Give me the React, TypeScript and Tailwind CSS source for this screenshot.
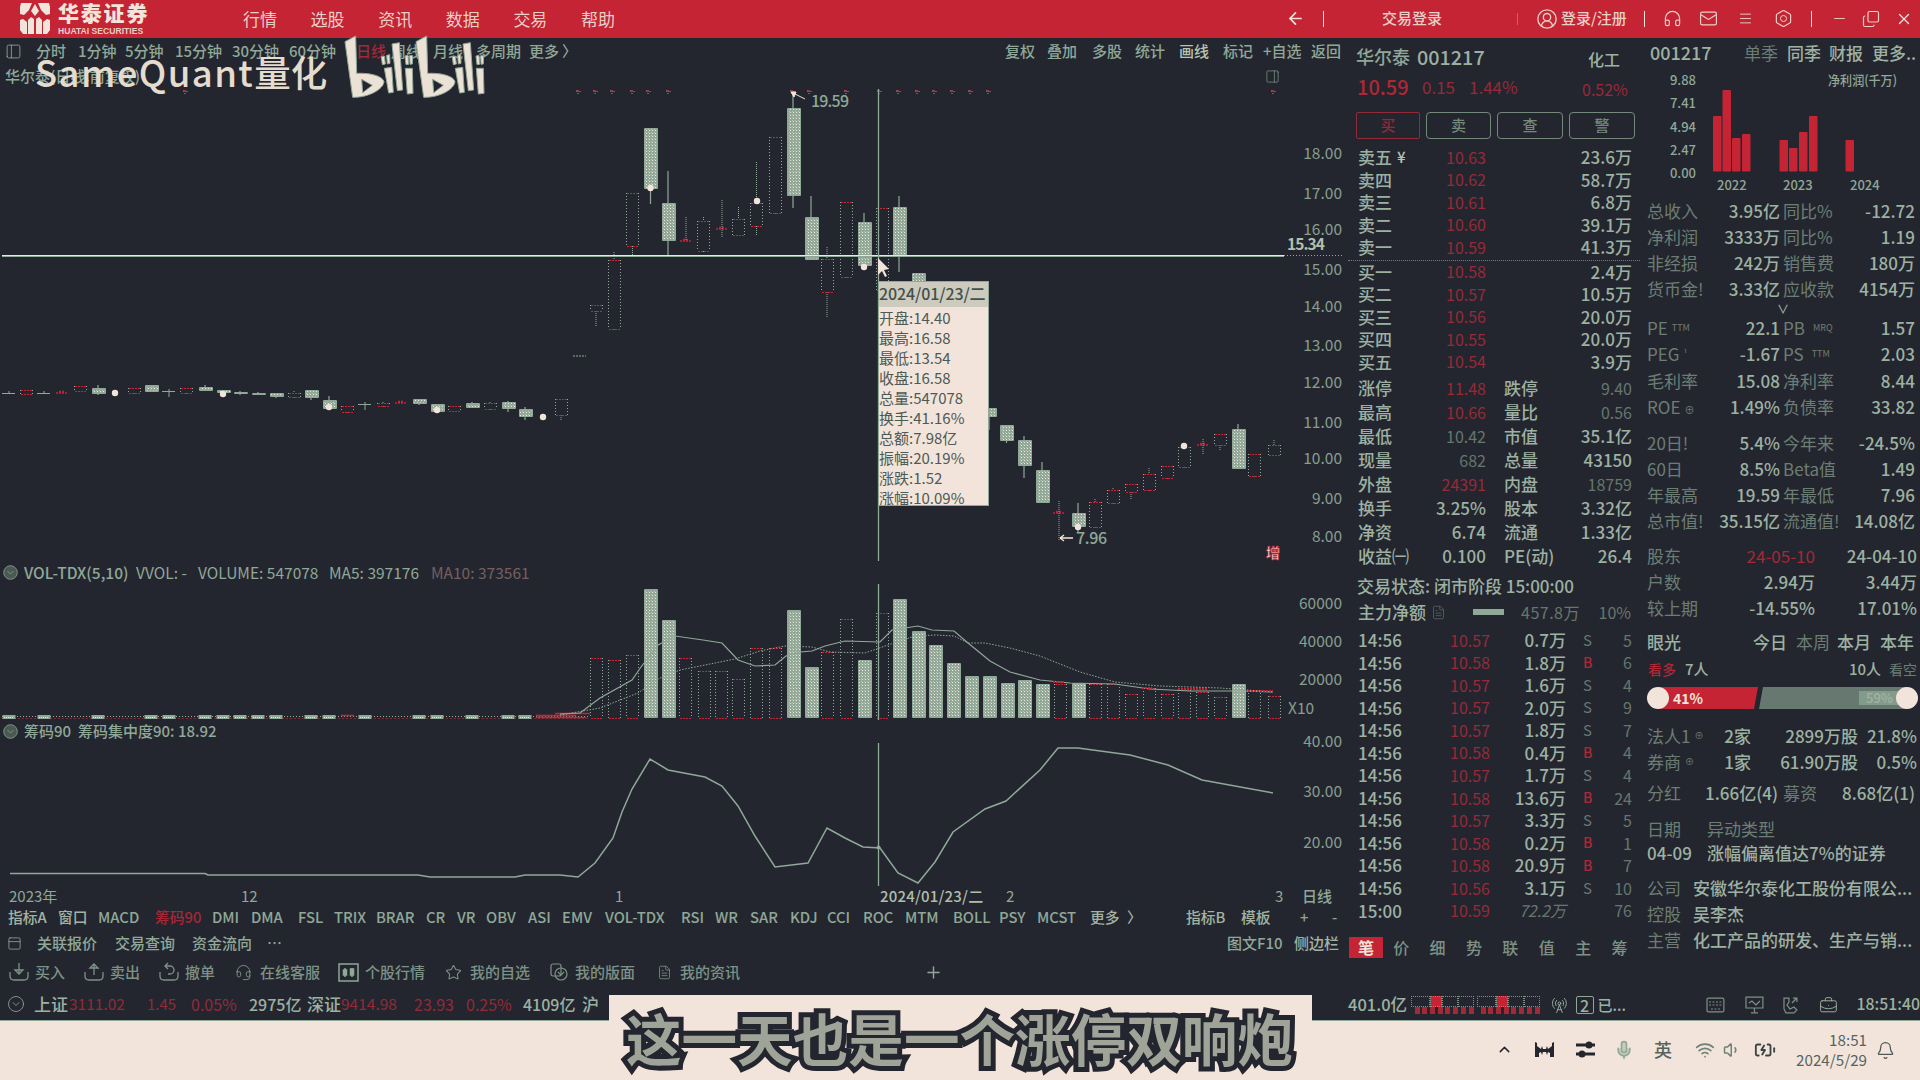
import React from "react";
import {
  ArrowLeft, Bell, BatteryCharging, BriefcaseBusiness, ChevronUp, CircleUserRound, Copy,
  FileText, Headphones, Headset, Hexagon, Mail, Menu, Mic, Minus,
  Plus, RadioTower, Star, Volume1, Wifi, X, CircleChevronDown, ScanLine, PanelTop,
} from "lucide-react";

const BG = "#24262f";
const G = "#8fa898";
const R = "#c42434";
const C = "#f2e4da";

type Cell = [React.ReactNode, string?];

function Row({ cols, h, cells, cls = "" }: { cols: string; h: string; cells: Cell[]; cls?: string }) {
  return (
    <div className={`grid shrink-0 items-center whitespace-nowrap pb-[2px] ${cols} ${h} ${cls}`}>
      {cells.map(([t, c], i) => (
        <span key={i} className={`min-w-0 ${c ?? ""}`}>{t}</span>
      ))}
    </div>
  );
}

/* ---------- chart data ---------- */

type Kind = "s" | "h";
const candles: [number, number, number, number, number, Kind][] = [
  [26, 390, 394, 390, 394, "h"], [80, 386, 391, 386, 391, "h"], [98, 388, 394, 385, 395, "s"],
  [134, 388, 393, 388, 394, "h"], [151, 385, 392, 385, 392, "s"], [186, 388, 393, 388, 394, "h"],
  [205, 387, 391, 385, 391, "s"], [223, 390, 393, 390, 396, "s"], [240, 392, 394, 391, 395, "s"],
  [258, 393, 395, 392, 395, "s"], [276, 393, 397, 393, 398, "s"], [294, 393, 397, 391, 399, "h"],
  [311, 390, 398, 390, 400, "s"], [329, 400, 409, 396, 410, "s"], [347, 406, 412, 406, 413, "h"],
  [383, 403, 406, 402, 407, "h"], [419, 399, 404, 399, 405, "s"], [437, 404, 412, 404, 413, "s"],
  [454, 406, 411, 406, 411, "h"], [472, 403, 408, 402, 408, "s"], [490, 403, 409, 402, 411, "h"],
  [508, 402, 409, 401, 412, "s"], [525, 409, 417, 407, 420, "s"], [561, 399, 415, 399, 421, "h"],
  [596, 305, 311, 305, 327, "h"], [614, 260, 329, 252, 331, "h"], [632.5, 193, 246, 193, 255, "h"],
  [650.5, 128, 189, 128, 204, "s"], [668, 203, 241, 171, 255, "s"], [703.5, 221, 251, 217, 253, "h"],
  [738.5, 219, 235, 207, 235, "h"], [756.5, 203, 226, 162, 236, "h"], [775, 137, 213, 137, 215, "h"],
  [793, 108, 196, 92, 208, "s"], [811, 217, 260, 196, 260, "s"], [827, 259, 292, 247, 318, "h"],
  [846, 202, 277, 202, 279, "h"], [864, 222, 266, 213, 268, "s"], [882, 208, 290, 208, 290, "h"],
  [899, 207, 256, 196, 272, "s"], [918, 273, 290, 273, 290, "s"], [989, 408, 417, 408, 430, "s"],
  [1006.5, 425, 441, 425, 443, "s"], [1024, 440, 466, 436, 478, "s"], [1042, 470, 503, 462, 503, "s"],
  [1078, 513, 527, 503, 533, "s"], [1095, 502, 527, 499, 528, "h"], [1113, 490, 503, 488, 504, "h"],
  [1131, 484, 492, 484, 499, "h"], [1149, 474, 490, 468, 491, "h"], [1167, 466, 478, 466, 480, "h"],
  [1184, 447, 467, 447, 468, "h"], [1220, 434, 445, 434, 451, "h"], [1238, 429, 469, 424, 469, "s"],
  [1254, 454, 476, 454, 477, "h"], [1274, 445, 455, 440, 455, "h"],
];

const volumes: [number, number, Kind][] = [
  [596, 658, "h"], [614, 660, "h"], [632.5, 655, "h"], [650.5, 589, "s"], [668, 620, "s"], [685, 658, "h"],
  [704, 671, "h"], [721, 671, "h"], [738.5, 679, "h"], [756.5, 648, "h"], [775, 648, "h"], [793, 610, "s"],
  [811, 667, "s"], [827, 652, "h"], [846, 619, "h"], [864, 660, "s"], [882, 613, "h"], [899, 599, "s"],
  [918, 631, "s"], [935.5, 645, "s"], [953.5, 663, "s"], [971, 676, "s"], [989, 676, "s"], [1007, 683, "s"],
  [1024, 680, "s"], [1042, 684, "s"], [1060, 684, "h"], [1078, 683, "s"], [1095, 684, "h"], [1113, 684, "h"],
  [1131, 694, "h"], [1149, 688, "h"], [1167, 694, "h"], [1184, 690, "h"], [1202, 692, "h"], [1220, 697, "h"],
  [1238, 684, "s"], [1254, 690, "h"], [1274, 696, "h"],
];

const flatSolid = [9, 44, 98, 151, 169, 205, 223, 240, 258, 276, 311, 329, 365, 419, 437, 472, 508, 525];
const ticks = [185, 578, 595, 612, 632, 648, 668, 792, 809, 846, 879, 898, 917, 934, 952, 970, 988, 1273];
const prices: [string, number][] = [
  ["18.00", 153], ["17.00", 193], ["16.00", 229], ["15.00", 269], ["14.00", 306], ["13.00", 345],
  ["12.00", 382], ["11.00", 422], ["10.00", 458], ["9.00", 498], ["8.00", 536],
];

function Defs() {
  return (
    <defs>
      <pattern id="dots" width="3" height="3" patternUnits="userSpaceOnUse">
        <rect width="3" height="3" fill={G} />
        <rect width="1" height="1" x="1" y="1" fill={C} />
        <rect width="1" height="1" x="0" y="0" fill="#b9c0ae" />
      </pattern>
    </defs>
  );
}

function Body({ x, t, b, k }: { x: number; t: number; b: number; k: Kind }) {
  const l = Math.round(x - 6.5) + 0.5;
  if (k === "s")
    return (
      <g>
        <rect x={l - 0.5} y={t} width={14} height={b - t} fill={G} rx={1} />
        <rect x={l + 0.5} y={t + 1} width={12} height={Math.max(0, b - t - 2)} fill="url(#dots)" />
      </g>
    );
  return (
    <g shapeRendering="crispEdges" fill="none">
      <path d={`M${l} ${t}V${b}M${l + 12} ${t}V${b}`} stroke={G} strokeDasharray="1 2" />
      <path d={`M${l} ${t + 0.5}H${l + 12}M${l} ${b + 0.5}H${l + 12}`} stroke={R} strokeDasharray="2 1" />
    </g>
  );
}

function PriceChart() {
  return (
    <svg className="block shrink-0 font-['Noto_Sans_CJK_SC','Noto_Sans',sans-serif]" width="1348" height="475" viewBox="0 86 1348 475">
      <Defs />
      {ticks.map((x) => (
        <g key={x}>
          <rect x={x - 1} y={90} width={2} height={2} fill={R} />
          <path d={`M${x - 2} 91h1M${x} 93v1M${x + 1.5} 91.5h1`} stroke={G} />
        </g>
      ))}
      {candles.map(([x, t, b, wt, wb, k], i) => (
        <g key={i}>
          {k === "s" ? (
            <path d={`M${x} ${wt}V${wb}`} stroke={G} strokeWidth={1.2} />
          ) : (
            <path d={`M${x} ${wt}V${t}M${x} ${b}V${wb}`} stroke={G} strokeDasharray="1 1" />
          )}
          <Body x={x} t={t} b={b} k={k} />
        </g>
      ))}
      {[[9, 393], [44, 393], [169, 391], [365, 404]].map(([x, y]) => (
        <path key={x} d={`M${x - 7} ${y + 0.5}h13M${x} ${y - 2}v${x > 100 ? 8 : 3}`} stroke={G} />
      ))}
      {[[62, 393], [401, 403], [686, 241], [722, 229], [1059, 513], [1203, 445]].map(([x, y]) => (
        <path key={x} d={`M${x - 6} ${y}h12M${x - 3} ${y - 1.5}h6`} stroke={R} strokeWidth={1.5} strokeDasharray="2 1" />
      ))}
      <path d="M686 217v23M722 200v38M1059 501v32M1203 439v16M1059 533V540" stroke={G} strokeDasharray="1 1" />
      <path d="M573 356h13" stroke={G} strokeDasharray="2 1" />
      {[[115, 393], [223, 394], [329, 407], [437, 410], [543, 417], [650.5, 188], [757, 201], [864, 267], [1078, 527], [1184, 446]].map(([x, y]) => (
        <circle key={x} cx={x} cy={y} r={3.2} fill={C} />
      ))}
      <path d="M2 255.5H1284" stroke={C} />
      <path d="M2 256.5H1284" stroke={G} />
      <path d="M1284 255.5h60" stroke={G} strokeDasharray="1 2" />
      <path d="M878.5 89V561" stroke={G} strokeWidth={1.3} />
      <path d="M793 93l12 6M791 92h5l-2 5z" stroke={C} fill={C} />
      <text x="811" y="106.500" fontSize="16" fontWeight="500" fill={G} textLength="38">19.59</text>
      <path d="M1060 538h13M1060 538l4-3M1060 538l4 3" stroke={C} fill="none" strokeWidth={1.3} />
      <text x="1076" y="544" fontSize="16" fontWeight="500" fill={G} textLength="31">7.96</text>
      {prices.map(([s, y]) => (
        <text key={s} x="1342" y={y + 5.5} fontSize="15.500" textAnchor="end" fill="#879e8f">{s}</text>
      ))}
      <text x="1287" y="250" fontSize="15.500" fontWeight="600" fill="#b3bfae" textLength="38">15.34</text>
      <text x="1266" y="558" fontSize="14" fontWeight="700" fill={C} stroke={R} strokeWidth="0.7">增</text>
      <path d="M878 258l0 17 4-4 3 6 2-1-3-6 5-1z" fill={C} />
    </svg>
  );
}

function VolumeChart() {
  return (
    <svg className="block shrink-0 font-['Noto_Sans_CJK_SC','Noto_Sans',sans-serif]" width="1348" height="137" viewBox="0 583 1348 137">
      <path d="M2 716.5H590" stroke={G} strokeDasharray="1 2" />
      <path d="M2 718.5H590" stroke="#7d2a36" strokeDasharray="2 2" />
      {flatSolid.map((x) => (
        <g key={x}>
          <rect x={x - 6.5} y={715} width={13} height={4} fill={G} />
          <path d={`M${x - 5} 717.5h10`} stroke={C} strokeDasharray="1 1" />
        </g>
      ))}
      <path d="M341 715.5h13M536 715.5h40M555 713.5h35M536 717.5h50" stroke={R} strokeWidth={1.5} />
      {volumes.map(([x, t, k], i) => <Body key={i} x={x} t={t} b={718} k={k} />)}
      <path d="M560 715L600 708 638 693 660 678 680 670 735 659 760 651 785 646 812 647 830 652 865 653 888 645 915 636 935 635 954 636 968 643 985 643 1010 648 1040 656 1080 672 1115 682 1160 686 1220 688 1273 692" fill="none" stroke={G} strokeDasharray="1.5 1.5" />
      <path d="M560 714L580 713 600 698 632 680 641 667 658 645 675 636 703 640 722 643 738 660 755 666 775 665 786 656 800 652 812 651 825 646 845 641 880 642 892 630 918 626 932 630 954 631 968 643 990 661 1010 672 1040 680 1070 683 1115 684 1150 689 1190 691 1240 691 1273 692" fill="none" stroke={G} strokeWidth={1.2} />
      <path d="M1053 682h12M1142 688h10M1178 689h30M1248 691h25" stroke={R} strokeWidth={2} strokeDasharray="2 1" />
      <path d="M878.500 584V720" stroke={G} strokeWidth={1.3} />
      {([["60000", 603], ["40000", 641], ["20000", 679]] as [string, number][]).map(([s, y]) => (
        <text key={s} x="1342" y={y + 5.5} fontSize="15.500" textAnchor="end" fill="#879e8f">{s}</text>
      ))}
      <text x="1288" y="713.500" fontSize="15.500" fill="#879e8f">X10</text>
    </svg>
  );
}

function ChipChart() {
  return (
    <svg className="block shrink-0 overflow-visible font-['Noto_Sans_CJK_SC','Noto_Sans',sans-serif]" width="1348" height="144" viewBox="0 742 1348 144">
      <path d="M10 873.5H205L208 875H418L430 877H515L525 875H560L578 877 595 863 613 838 622 812 632 789 650 759 668 770 705 777 722 786 738 806 755 836 775 867 808 863 827 828 845 838 863 847 880 848 898 873 918 883 935 862 953 832 985 809 1006 801 1040 770 1058 748H1078L1130 755 1168 765 1202 780 1273 793" fill="none" stroke={G} strokeWidth={1.5} />
      <path d="M878.500 743V886" stroke={G} strokeWidth={1.3} />
      <circle cx="878.500" cy="847.500" r="2" fill={G} />
      {([["40.00", 741], ["30.00", 791], ["20.00", 842]] as [string, number][]).map(([s, y]) => (
        <text key={s} x="1342" y={y + 5.5} fontSize="15.500" textAnchor="end" fill="#879e8f">{s}</text>
      ))}
    </svg>
  );
}

/* ---------- header ---------- */

function BiliLogo() {
  const half = (
    <g>
      <path fillRule="evenodd" d="M45 35L64 25 77 18 80 130C120 128 158 138 162 155C160 178 115 203 68 202L58 130zM95 148L127 166 98 188z" />
      <path d="M163 115L185 112 190 187 176 189zM154 80l9-2 3 24-9 2zM170 76l9-2 1 26-8 2zM186 42L208 38 218 180 202 182zM226 115L247 115 249 190 232 192zM225 78l9-2 2 27-8 1zM239 77h9l-1 25-7 1z" />
    </g>
  );
  return (
    <svg width="180" height="74" viewBox="0 0 540 222" fill="#ece1d5" stroke={G} strokeWidth="3">
      {half}
      <g transform="translate(213 0)">{half}</g>
    </svg>
  );
}

function Header() {
  return (
    <header className="flex h-[38px] shrink-0 items-center bg-[#c42434] text-[#e9cfc6]">
      <div className="flex w-[243px] items-center pl-5">
        <svg width="30" height="32" viewBox="0 0 30 32" fill={C}>
          <path d="M1 0h11l-3 7-5 5-4-1V4zM29 0H18l3 7 5 5 4-1V4zM15 1l4 7-4 5-4-5zM0 17l3-1 4 3v12H3l-3-4zM30 17l-3-1-4 3v12h4l3-4zM8 17l3-3 3 2v15H8zM22 17l-3-3-3 2v15h6z" />
        </svg>
        <div className="ml-[8px] flex flex-col">
          <span className="-mt-[2px] h-[24px] text-[21px] font-black leading-[23px] tracking-[1.800px] text-[#f2e4da]">华泰证券</span>
          <span className="mt-[2px] h-[8px] whitespace-nowrap font-['Liberation_Sans',sans-serif] text-[8.600px] font-bold leading-[8px]">HUATAI SECURITIES</span>
        </div>
      </div>
      <nav className="flex w-[1043px] gap-[33.6px] text-[17px]">
        {["行情", "选股", "资讯", "数据", "交易", "帮助"].map((t) => <span key={t}>{t}</span>)}
      </nav>
      <Row
        cols="grid-cols-[37px_59px_135px_19px_25px_83px_19px_36px_39px_36px_37px_20px_31px_33px_25px]"
        h="h-[38px]"
        cls="pt-[1px] text-[15px] font-medium"
        cells={[
          [<ArrowLeft size={19} color={C} strokeWidth={2.2} />],
          [<i className="block h-4 w-px bg-[#f2e4da]" />],
          ["交易登录"],
          [<i className="block h-3 w-px bg-[#8f7a78]" />],
          [<CircleUserRound size={22} strokeWidth={1.5} />],
          ["登录/注册"],
          [<i className="block h-4 w-px bg-[#f2e4da]" />],
          [<Headphones size={19} strokeWidth={1.5} />],
          [<Mail size={19} strokeWidth={1.5} />],
          [<Menu size={15} strokeWidth={1.5} />],
          [<span className="relative block"><Hexagon size={19} strokeWidth={1.5} /><i className="absolute left-[6px] top-[6px] size-[7px] rounded-full border border-[#e9cfc6]" /></span>],
          [<i className="block h-4 w-px bg-[#f2e4da]" />],
          [<Minus size={17} strokeWidth={1.3} />],
          [<Copy size={18} strokeWidth={1.6} className="-scale-y-100" />],
          [<X size={18} color={C} strokeWidth={1.8} />],
        ]}
      />
    </header>
  );
}

/* ---------- left ---------- */

function Tooltip() {
  const rows = ["开盘:14.40", "最高:16.58", "最低:13.54", "收盘:16.58", "总量:547078", "换手:41.16%", "总额:7.98亿", "振幅:20.19%", "涨跌:1.52", "涨幅:10.09%"];
  return (
    <div className="absolute left-[878px] top-[243px] h-[225px] w-[111px] overflow-hidden border border-[#8fa898] bg-[#f2e4da] text-[15px] text-[#4d5a56]">
      <div className="h-[25px] bg-[#cdcbbd] text-[16px] font-medium leading-[23px] tracking-[-0.100px] text-[#43504c]">2024/01/23/二</div>
      <div className="pt-px">
        {rows.map((r) => <div key={r} className="h-5 whitespace-nowrap leading-5">{r}</div>)}
      </div>
    </div>
  );
}

const Dot = () => (
  <svg width="15" height="15" viewBox="0 0 15 15" fill="none" stroke="#7d9286">
    <circle cx="7.500" cy="7.500" r="6.800" fill="#4b5953" /><path d="M4.500 6l3 3 3-3" />
  </svg>
);

function Tray({ d }: { d: string }) {
  return (
    <svg width="20" height="20" viewBox="0 0 20 20" fill="none" stroke="#7d9286" strokeWidth="1.3">
      <path d="M1 10v4q0 4 4 4h10q4 0 4-4v-4" />
      <path d={d} />
    </svg>
  );
}

function Left() {
  const act: Cell[] = [
    [<Tray d="M10 1v11M6 8l4 4 4-4z" />], ["买入"], [<Tray d="M10 13V2M6 6l4-4 4 4z" />], ["卖出"],
    [<Tray d="M6 4h5a4 4 0 0 1 0 8H9M9 1L6 4l3 3" />], ["撤单"], [<Headset size={17} strokeWidth={1.3} />], ["在线客服"],
    [<svg width="21" height="19" viewBox="0 0 21 19" fill="none" stroke={G} strokeWidth="1.500"><path d="M1 1h19v17H1zM7 5v9M14 5v9" /><path d="M5.500 7h3v5h-3zM12.500 6h3v6h-3z" fill={G} /></svg>], ["个股行情"],
    [<Star size={17} strokeWidth={1.5} />], ["我的自选"],
    [<svg width="18" height="18" viewBox="0 0 18 18" fill="none" stroke="#7d9286" strokeWidth="1.200"><rect x="1" y="1" width="10" height="12" rx="2" /><circle cx="11" cy="11" r="6" /><path d="M8 9l3 3 3-3" /></svg>], ["我的版面"],
    [<FileText size={15} strokeWidth={1.3} />], ["我的资讯"],
    [<Plus size={19} color={G} strokeWidth={1.8} />],
  ];
  return (
    <section className="relative flex w-[1348px] shrink-0 flex-col overflow-hidden text-[15px] text-[#8fa898]">
      <Row
        cols="grid-cols-[31px_42px_47px_50px_57px_57px_67px_35px_42px_43px_53px_33px_443px_42px_45px_43px_44px_44px_40px_48px_36px]"
        h="h-[28px]"
        cls="pl-[5px] font-medium"
        cells={[
          [<PanelTop size={17} strokeWidth={1.2} className="-rotate-90" />], ["分时"], ["1分钟"], ["5分钟"], ["15分钟"], ["30分钟"], ["60分钟"],
          ["日线", "text-[#a52836]"], ["周线"], ["月线"], ["多周期"], ["更多"], ["〉"],
          ["复权"], ["叠加"], ["多股"], ["统计"], ["画线", "text-[#b7c3b2]"], ["标记"], ["+自选"], ["返回"],
        ]}
      />
      <div className="flex h-5 shrink-0 items-center pl-[5px]">
        <span className="w-[1260px] font-medium">华尔泰(日线.前复权)</span>
        <PanelTop size={15} strokeWidth={1} className="rotate-90" />
      </div>
      <PriceChart />
      <Row
        cols="grid-cols-[21px_112px_62px_131px_102px_120px]"
        h="h-[22px]"
        cls="pl-[3px] text-[15.5px]"
        cells={[[<Dot />], ["VOL-TDX(5,10)", "font-medium"], ["VVOL: -"], ["VOLUME: 547078"], ["MA5: 397176"], ["MA10: 373561", "text-[#75605f]"]]}
      />
      <VolumeChart />
      <Row cols="grid-cols-[21px_54px_200px]" h="h-[22px]" cls="pl-[3px] font-medium" cells={[[<Dot />], ["筹码90"], ["筹码集中度90: 18.92"]]} />
      <ChipChart />
      <Row
        cols="grid-cols-[232px_374px_265px_126px_269px_27px_40px]"
        h="h-[18px]"
        cls="-mt-px mb-px pl-[9px]"
        cells={[["2023年"], ["12"], ["1"], ["2024/01/23/二", "font-medium tracking-[0.2px] text-[#b0bdac]"], ["2"], ["3"], ["日线", "font-medium"]]}
      />
      <Row
        cols="grid-cols-[50px_40px_57px_57px_39px_47px_36px_42px_50px_31px_29px_42px_34px_43px_76px_34px_35px_40px_37px_36px_42px_48px_46px_38px_53px_37px_59px_55px_59px_32px_16px]"
        h="h-[28px]"
        cls="pl-[8px] text-[14.800px] font-medium"
        cells={["指标A", "窗口", "MACD", "筹码90", "DMI", "DMA", "FSL", "TRIX", "BRAR", "CR", "VR", "OBV", "ASI", "EMV", "VOL-TDX", "RSI", "WR", "SAR", "KDJ", "CCI", "ROC", "MTM", "BOLL", "PSY", "MCST", "更多", "〉", "指标B", "模板", "+", "-"].map(
          (t): Cell => [t, t === "筹码90" ? "text-[#a52836]" : t.charCodeAt(0) > 255 ? "text-[#a3b3a2]" : ""],
        )}
      />
      <Row
        cols="grid-cols-[30px_78px_77px_75px_960px_67px_50px]"
        h="h-[24px]"
        cls="pl-[7px] font-medium"
        cells={[[<PanelTop size={15} strokeWidth={1.3} />], ["关联报价"], ["交易查询"], ["资金流向"], ["…"], ["图文F10"], ["侧边栏", "text-[#a3b3a2]"]]}
      />
      <Row cols="grid-cols-[26px_49px_26px_49px_26px_50px_25px_78px_27px_80px_25px_80px_25px_82px_23px_244px_20px]" h="h-[34px]" cls="pl-[9px] font-medium text-[#7d9286]" cells={act} />
      <Tooltip />
    </section>
  );
}

/* ---------- order book ---------- */

const P = "pr-0 text-right font-normal text-[#962a38] text-[16px]";
const DIM = "text-right font-normal text-[#66766e] text-[16px]";
const VAL = "text-right";

function Book() {
  const asks = [["卖五", "10.63", "23.6万"], ["卖四", "10.62", "58.7万"], ["卖三", "10.61", "6.8万"], ["卖二", "10.60", "39.1万"], ["卖一", "10.59", "41.3万"]];
  const bids = [["买一", "10.58", "2.4万"], ["买二", "10.57", "10.5万"], ["买三", "10.56", "20.0万"], ["买四", "10.55", "20.0万"], ["买五", "10.54", "3.9万"]];
  const stats: [string, string, string, string, string, string][] = [
    ["涨停", "11.48", P, "跌停", "9.40", DIM], ["最高", "10.66", P, "量比", "0.56", DIM],
    ["最低", "10.42", DIM, "市值", "35.1亿", VAL], ["现量", "682", DIM, "总量", "43150", VAL],
    ["外盘", "24391", P, "内盘", "18759", DIM], ["换手", "3.25%", VAL, "股本", "3.32亿", VAL],
    ["净资", "6.74", VAL, "流通", "1.33亿", VAL], ["收益㈠", "0.100", VAL, "PE(动)", "26.4", VAL],
  ];
  const trades = [
    ["14:56", "10.57", "0.7万", "S", "5"], ["14:56", "10.58", "1.8万", "B", "6"], ["14:56", "10.57", "1.6万", "S", "4"],
    ["14:56", "10.57", "2.0万", "S", "9"], ["14:56", "10.57", "1.8万", "S", "7"], ["14:56", "10.58", "0.4万", "B", "4"],
    ["14:56", "10.57", "1.7万", "S", "4"], ["14:56", "10.58", "13.6万", "B", "24"], ["14:56", "10.57", "3.3万", "S", "5"],
    ["14:56", "10.58", "0.2万", "B", "1"], ["14:56", "10.58", "20.9万", "B", "7"], ["14:56", "10.56", "3.1万", "S", "10"],
    ["15:00", "10.59", "72.2万", "", "76"],
  ];
  const line = ([a, p, v]: string[]) => (
    <Row key={a} cols="grid-cols-[34px_14px_80px_146px]" h="h-[22.5px]" cells={[[a], [a === "卖五" ? "¥" : "", "pl-[5px] text-[15px] text-[#b7c3b2]"], [p, P], [v, VAL]]} />
  );
  return (
    <section className="flex w-[292px] shrink-0 flex-col overflow-hidden text-[17px] font-medium text-[#9db1a2]">
      <div className="flex h-[37px] items-center pl-2">
        <span className="w-[61px] text-[18px] text-[#8fa898]">华尔泰</span>
        <span className="w-[171px] text-[19.800px]">001217</span>
        <span className="pt-1 text-[16px]">化工</span>
      </div>
      <div className="flex h-[26px] items-center pb-[2px] pl-[9px] text-[16px] font-normal text-[#962a38]">
        <span className="w-[65px] text-[20px] font-medium text-[#b02735]">10.59</span>
        <span className="w-[47px] text-[17px]">0.15</span>
        <span className="w-[113px] text-[17px]">1.44%</span>
        <span className="pt-1">0.52%</span>
      </div>
      <div className="grid grid-cols-[64px_65px_66px_66px] gap-[6px] pl-2 pt-[11px] text-center text-[15px]">
        <span className="h-[27px] rounded-[2px] border border-[#922a38] leading-[23px] text-[#922a38]">买</span>
        {["卖", "查", "警"].map((t) => <span key={t} className="h-[27px] rounded-[4px] border border-[#74887c] leading-[23px] text-[#74887c]">{t}</span>)}
      </div>
      <div className="pl-[10px] pt-[5px]">{asks.map(line)}</div>
      <div className="mt-[3px] border-t border-dotted border-[#6f8277] pl-[10px]">
        <div className="-mt-[2px]">{bids.map(line)}</div>
      </div>
      <div className="pl-[10px] pt-[4px]">
        {stats.map(([a, b, bc, c, d, dc]) => (
          <Row key={a} cols="grid-cols-[68px_60px_18px_60px_68px]" h="h-[24px]" cells={[[a], [b, bc], [""], [c], [d, dc]]} />
        ))}
      </div>
      <div className="mt-[6px] flex h-[26px] items-center whitespace-nowrap pl-[9px]">交易状态: 闭市阶段 15:00:00</div>
      <Row
        cols="grid-cols-[73px_42px_45px_68px_45px]"
        h="h-[28px]"
        cls="pl-[10px] text-[16px] text-[#66766e]"
        cells={[["主力净额", "text-[17px] text-[#9db1a2]"], [<FileText size={15} strokeWidth={1} />], [<i className="block h-[6px] w-[31px] bg-[#8fa898]" />], ["457.8万", "text-right pr-[6px] font-normal tracking-[0.5px]"], ["10%", "text-right font-normal"]]}
      />
      <div className="pl-[10px]">
        {trades.map(([t, p, v, s, n], i) => (
          <Row key={i} cols="grid-cols-[68px_64px_76px_17px_10px_39px]" h="h-[22.550px]" cells={[[t], [p, P], [v, i === 12 ? "text-right italic font-normal text-[#66766e] text-[16px]" : VAL], [""], [s, s === "B" ? "text-[14px] text-[#b02735]" : "text-[15px] font-normal text-[#66766e]"], [n, DIM]]} />
        ))}
      </div>
      <div className="mt-auto mb-[33px] flex h-[22px] items-center pl-px text-[16px] text-[#7d9286]">
        <span className="flex h-[21px] w-[34px] items-center justify-center bg-[#c42434] font-bold text-[#f2e4da]">笔</span>
        {["价", "细", "势", "联", "值", "主", "筹"].map((t) => <span key={t} className="w-[36.4px] text-center font-medium">{t}</span>)}
      </div>
    </section>
  );
}

/* ---------- fundamentals ---------- */

function Fund() {
  const bars = [[1713, 116], [1722.5, 90], [1732, 138], [1742, 134], [1779.5, 140], [1789, 148], [1799, 132], [1809, 116], [1845.5, 140]];
  const L = "font-normal text-[#6c7e74]";
  const fin = (rows: string[][]) =>
    rows.map(([a, b, c, d]) => (
      <Row key={a} cols="grid-cols-[55px_78px_3px_54px_78px]" h="h-[26.100px]"
        cells={[[a, L], [b, VAL], [""], [c, L], [d, VAL]]} />
    ));
  return (
    <section className="flex w-[280px] shrink-0 flex-col overflow-hidden whitespace-nowrap text-[17px] font-medium text-[#9db1a2]">
      <Row cols="grid-cols-[94px_43px_42px_43px_50px]" h="h-[31px]" cls="pl-[10px] font-medium" cells={[["001217", "text-[18px]"], ["单季", L], ["同季"], ["财报"], ["更多.."]]} />
      <svg className="block shrink-0 font-['Noto_Sans_CJK_SC','Noto_Sans',sans-serif]" width="280" height="129" viewBox="1640 69 280 129" fontSize="13" fill={G}>
        {([["9.88", 80], ["7.41", 103], ["4.94", 127], ["2.47", 150], ["0.00", 173.5]] as [string, number][]).map(([s, y]) => (
          <text key={s} x="1696" y={y + 4.5} textAnchor="end">{s}</text>
        ))}
        <text x="1828" y="84.500" fontSize="13" textLength="69" lengthAdjust="spacingAndGlyphs">净利润(千万)</text>
        {bars.map(([x, y]) => <rect key={x} x={x} y={y} width="8.500" height={171.5 - y} rx="1" fill={R} />)}
        <text x="1717" y="190">2022</text><text x="1783" y="190">2023</text><text x="1850" y="190">2024</text>
      </svg>
      <div className="pl-[7px]">
        {fin([["总收入", "3.95亿", "同比%", "-12.72"], ["净利润", "3333万", "同比%", "1.19"], ["非经损", "242万", "销售费", "180万"], ["货币金!", "3.33亿", "应收款", "4154万"]])}
      </div>
      <div className="flex h-[13px] items-center pl-[137px] text-[12px]">∨</div>
      <div className="pl-[7px]">
        {[["PE", "TTM", "22.1", "PB", "MRQ", "1.57"], ["PEG", "¹", "-1.67", "PS", "TTM", "2.03"]].map(([a, s, b, c, t, d]) => (
          <Row key={a} cols="grid-cols-[55px_78px_3px_54px_78px]" h="h-[26.100px]"
            cells={[[<>{a}<sup className="ml-1 text-[9px]">{s}</sup></>, L], [b, VAL], [""], [<>{c}<sup className="ml-2 text-[9px]">{t}</sup></>, L], [d, VAL]]} />
        ))}
        {fin([["毛利率", "15.08", "净利率", "8.44"]])}
        <Row cols="grid-cols-[55px_78px_3px_54px_78px]" h="h-[26.100px]"
          cells={[[<>ROE<span className="ml-1 align-middle text-[10px]">⊕</span></>, L], ["1.49%", VAL], [""], ["负债率", L], ["33.82", VAL]]} />
      </div>
      <div className="pl-[7px] pt-[10px]">
        {fin([["20日!", "5.4%", "今年来", "-24.5%"], ["60日", "8.5%", "Beta值", "1.49"], ["年最高", "19.59", "年最低", "7.96"], ["总市值!", "35.15亿", "流通值!", "14.08亿"]])}
      </div>
      <div className="pl-[7px] pt-[9px]">
        {[["股东", "24-05-10", "24-04-10"], ["户数", "2.94万", "3.44万"], ["较上期", "-14.55%", "17.01%"]].map(([a, b, c]) => (
          <Row key={a} cols="grid-cols-[58px_110px_102px]" h="h-[26px]" cells={[[a, L], [b, a === "股东" ? "text-right font-normal text-[#a52836]" : VAL], [c, VAL]]} />
        ))}
      </div>
      <Row cols="grid-cols-[106px_43px_41px_43px_40px]" h="h-[28px]" cls="mt-[8px] pl-[7px] font-medium" cells={[["眼光"], ["今日"], ["本周", L], ["本月"], ["本年"]]} />
      <Row cols="grid-cols-[37px_164px_40px_32px]" h="h-[26px]" cls="pl-[8px] text-[14px]" cells={[["看多", "text-[#b02735]"], ["7人", "text-[15px]"], ["10人", "text-[15px]"], ["看空", L]]} />
      <div className="relative mt-[4px] flex h-[22px] items-center justify-between pl-[7px] pr-[2px]">
        <svg width="271" height="22" viewBox="0 0 271 22">
          <path d="M10 0H111L107 22H10z" fill={R} />
          <path d="M116 0H260V22H112z" fill="#66786f" />
          <rect x="212" y="4" width="46" height="14" fill="#839b8c" />
          <circle cx="11" cy="11" r="11" fill={C} /><circle cx="260" cy="11" r="11" fill={C} />
        </svg>
        <span className="absolute left-[33px] text-[14px] font-bold text-[#f2e4da]">41%</span>
        <span className="absolute left-[226px] text-[13px] text-[#a3b3a2]">59%</span>
      </div>
      <div className="pl-[7px] pt-[14px]">
        {[["法人1", "2家", "2899万股", "21.8%"], ["券商", "1家", "61.90万股", "0.5%"]].map(([a, b, c, d]) => (
          <Row key={a} cols="grid-cols-[60px_44px_107px_59px]" h="h-[26px]" cells={[[<>{a}<sup className="ml-1 text-[9px]">⊕</sup></>, L], [b, VAL], [c, VAL], [d, VAL]]} />
        ))}
      </div>
      <Row cols="grid-cols-[44px_87px_5px_44px_88px]" h="h-[26px]" cls="mt-[5px] pl-[7px]" cells={[["分红", L], ["1.66亿(4)", VAL], [""], ["募资", L], ["8.68亿(1)", VAL]]} />
      <Row cols="grid-cols-[60px_210px]" h="h-[24px]" cls="mt-[10px] pl-[7px]" cells={[["日期", L], ["异动类型", L]]} />
      <Row cols="grid-cols-[60px_210px]" h="h-[26px]" cls="pl-[7px]" cells={[["04-09"], ["涨幅偏离值达7%的证券", "font-medium"]]} />
      <div className="pl-[7px] pt-[9px]">
        {[["公司", "安徽华尔泰化工股份有限公..."], ["控股", "吴李杰"], ["主营", "化工产品的研发、生产与销..."]].map(([a, b]) => (
          <Row key={a} cols="grid-cols-[46px_224px]" h="h-[26px]" cells={[[a, L], [b, "font-medium"]]} />
        ))}
      </div>
    </section>
  );
}

/* ---------- status + task bars ---------- */

function Status() {
  return (
    <div className="flex h-[28px] shrink-0 items-center whitespace-nowrap text-[17px] font-medium text-[#9db1a2]">
      <Row
        cols="grid-cols-[27px_35px_78px_44px_58px_58px_34px_73px_52px_57px_59px_766px]"
        h="h-[28px]"
        cls="w-[1348px] pl-[7px]"
        cells={[
          [<CircleChevronDown size={18} strokeWidth={1} />], ["上证"], ["3111.02", "font-normal text-[15.500px] text-[#922a38]"], ["1.45", "font-normal text-[15px] text-[#922a38]"], ["0.05%", "font-normal text-[16px] text-[#922a38]"],
          ["2975亿", "text-[16px]"], ["深证"], ["9414.98", "font-normal text-[15.500px] text-[#922a38]"], ["23.93", "font-normal text-[16px] text-[#922a38]"], ["0.25%", "font-normal text-[16px] text-[#922a38]"], ["4109亿", "text-[16px]"], ["沪"],
        ]}
      />
      <span className="w-[63px] pb-[2px] text-[16.500px]">401.0亿</span>
      <div className="flex w-[141px] gap-[3px]">
        {[0, 1].map((k) => (
          <div key={k} className="flex w-[63px] flex-col">
            <div className="grid h-[11px] grid-cols-[19px_12px_16px_16px] *:border *:border-dotted *:border-[#7d9286]">
              <i /><i className="bg-[#c42434]" /><i /><i />
            </div>
            <div className="ml-1 flex h-[7px] justify-between *:w-[5px] *:bg-[#a52836]">
              <i /><i /><i /><i /><i /><i /><i /><i />
            </div>
          </div>
        ))}
      </div>
      <RadioTower size={17} strokeWidth={1.3} className="mr-[8px]" />
      <span className="mr-[4px] flex h-[18px] w-[18px] items-center justify-center rounded-[2px] border border-[#8fa898] text-[16px]">2</span>
      <span className="w-[109px] text-[15px]">已...</span>
      <svg width="19" height="16" viewBox="0 0 19 16" fill="none" stroke="#7d9286" strokeWidth="1.200" className="mr-[20px]">
        <rect x="1" y="1" width="17" height="14" rx="1.500" /><path d="M3 5h13M3 8h13M5 12h9" strokeDasharray="2 1.500" />
      </svg>
      <svg width="19" height="18" viewBox="0 0 19 18" fill="none" stroke="#7d9286" strokeWidth="1.200" className="mr-[18px]">
        <path d="M1 1h17v11H1zM9.500 12v4M6 17h7M4 7l3-2 4 4 4-4" />
      </svg>
      <svg width="17" height="18" viewBox="0 0 17 18" fill="none" stroke="#7d9286" strokeWidth="1.200" className="mr-[20px]">
        <path d="M2 2h5v4L5 9l3 4 4-2 3 3-3 3H4L2 13z" /><path d="M10 7l5-5M11 2h4v4" />
      </svg>
      <BriefcaseBusiness size={19} strokeWidth={1.2} className="mr-[19px]" />
      <span className="pb-[2px] text-[15.800px]">18:51:40</span>
    </div>
  );
}

function Taskbar() {
  return (
    <div className="flex h-[60px] shrink-0 items-center justify-end border-t border-[#8fa898] bg-[#f2e4da] pr-[25px] text-[#24262f]">
      <Row
        cols="grid-cols-[39px_41px_40px_38px_41px_28px_31px_22px]"
        h="h-[30px]"
        cls="text-[18px]"
        cells={[
          [<ChevronUp size={17} strokeWidth={2} />],
          [<svg width="19" height="15" viewBox="0 0 19 15" fill={BG}><path d="M0 0l2 1v3l4 3 1-3 1 3h3l1-3 1 3 4-3V1l2-1v15h-4v-4l-2-1-1 3-1-3H8l-1 3-1-3-2 1v4H0z" /></svg>],
          [<svg width="19" height="18" viewBox="0 0 19 18" stroke={BG} strokeWidth="3"><path d="M0 4h19M0 13h19" /><circle cx="13" cy="4" r="2" fill={BG} /><circle cx="6" cy="13" r="2" fill={BG} /></svg>],
          [<Mic size={20} color={G} strokeWidth={2} fill="#c9cbbb" className="-ml-0.5" />],
          ["英", "text-[#56645f] font-medium"],
          [<Wifi size={20} color="#6f8277" strokeWidth={2} />],
          [<Volume1 size={18} color="#6f8277" strokeWidth={2} />],
          [<BatteryCharging size={22} color="#3b4443" strokeWidth={2} />],
        ]}
      />
      <div className="ml-[19px] w-[72px] pb-[3px] text-right text-[15.200px] leading-[20px] text-[#56645f]">
        <div>18:51</div>
        <div>2024/5/29</div>
      </div>
      <Bell size={19} color="#4d5a56" strokeWidth={1.6} className="ml-[9px]" />
    </div>
  );
}

export default function App() {
  return (
    <div className="relative flex h-[1080px] w-[1920px] flex-col overflow-hidden bg-[#24262f] font-['Noto_Sans_CJK_SC','Noto_Sans',sans-serif]">
      <Header />
      <main className="flex h-[953px] shrink-0">
        <Left />
        <Book />
        <Fund />
      </main>
      <Status />
      <div className="h-px shrink-0" />
      <Taskbar />
      <div className="absolute left-[35px] top-[49px] whitespace-nowrap text-[36.500px] font-medium leading-[46px] text-[#e4dccf]">
        <span className="tracking-[1.400px]">SameQuant</span>量化
      </div>
      <div className="absolute left-[330px] top-[30px]"><BiliLogo /></div>
      <div className="absolute left-[609px] top-[995px] flex h-[85px] w-[703px] items-center justify-center whitespace-nowrap bg-[#f2e4da] pr-[2px] text-[55.600px] font-bold text-[#a0a498] [-webkit-text-stroke:10px_#24262f] [paint-order:stroke_fill]">
        这一天也是一个涨停双响炮
      </div>
    </div>
  );
}
